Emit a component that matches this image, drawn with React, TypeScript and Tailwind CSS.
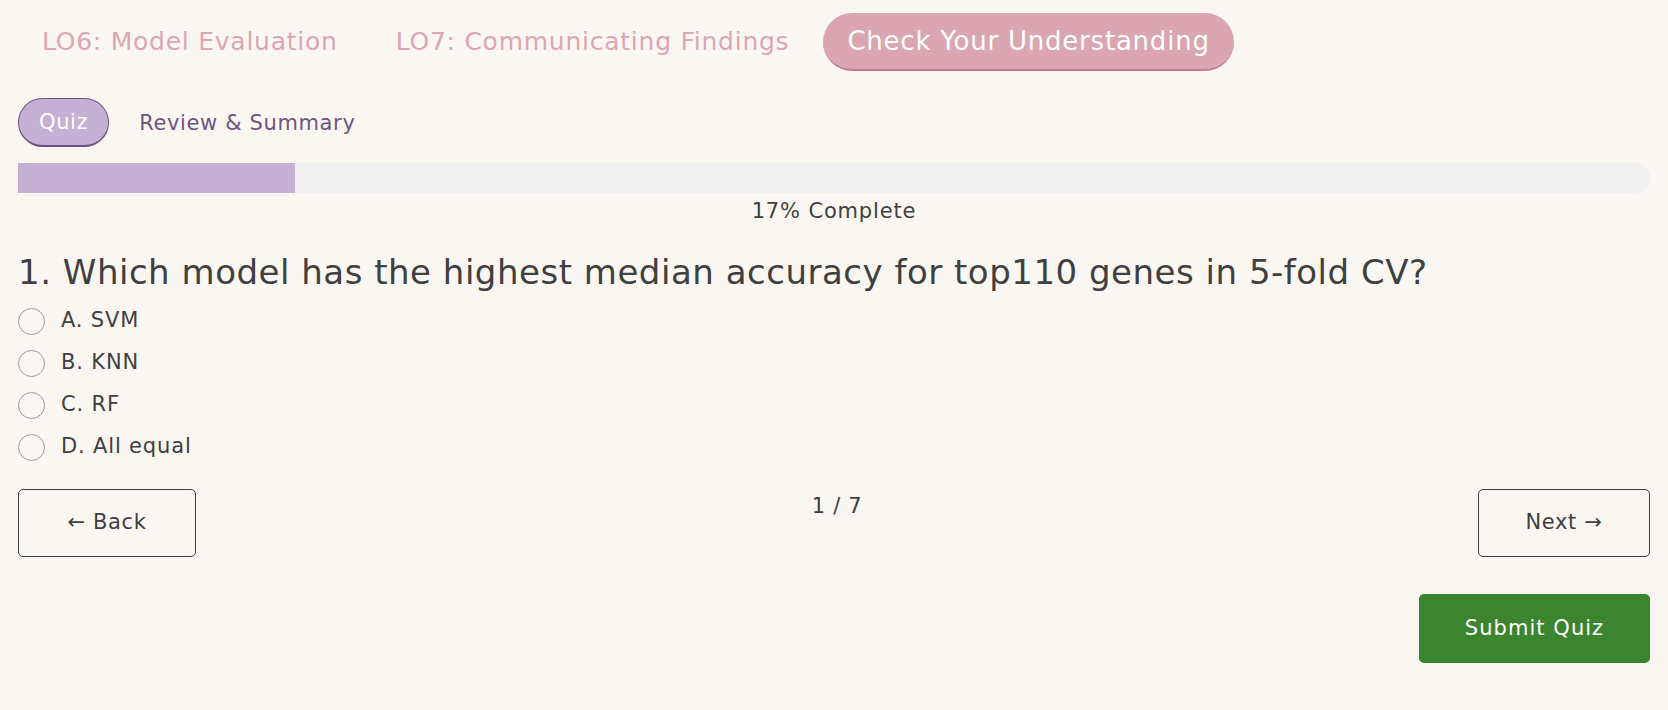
const tabs = ['LO6: Model Evaluation', 'LO7: Communicating Findings'];
const options = ['A. SVM', 'B. KNN', 'C. RF', 'D. All equal'];

export default function App() {
  return (
    <div className="min-h-[710px] bg-[#faf7f3] px-[18px] pt-[13px] text-[#404040] font-['DejaVu_Sans',sans-serif]">
      {/* Top tabs */}
      <div className="flex items-center gap-2.5">
        {tabs.map((t) => (
          <button key={t} className="px-6 py-2.5 text-[25px] leading-[36px] tracking-[0.03em] text-[#dca6b4]">
            {t}
          </button>
        ))}
        <button className="rounded-full border-b-2 border-[#c27d95] bg-[#d9a6b2] px-6 py-2.5 text-[26px] leading-[36px] tracking-[0.03em] text-white">
          Check Your Understanding
        </button>
      </div>

      {/* Sub tabs */}
      <div className="mt-[27px] flex items-center gap-2.5">
        <button className="rounded-full border border-b-2 border-[#6e5580] bg-[#c5b0d6] px-5 py-[8px] text-[21px] leading-[30px] tracking-[0.03em] text-white">
          Quiz
        </button>
        <button className="px-5 py-[8px] text-[21px] leading-[30px] tracking-[0.03em] text-[#6f5580]">
          Review &amp; Summary
        </button>
      </div>

      {/* Progress */}
      <div className="mt-[16px] h-[30px] w-full overflow-hidden rounded-r-full bg-[#f0f0f0]">
        <div className="h-full bg-[#c5b0d6]" style={{ width: '17%' }} />
      </div>
      <p className="mt-[3px] text-center text-[21px] leading-[30px] tracking-[0.04em]">17% Complete</p>

      {/* Question */}
      <h2 className="mt-[26px] text-[34px] leading-[40px] tracking-[0.015em]">
        1. Which model has the highest median accuracy for top110 genes in 5-fold CV?
      </h2>
      <div className="mt-[8px] flex flex-col">
        {options.map((o) => (
          <label key={o} className="flex h-[42px] items-center gap-[16px] text-[21px] tracking-[0.04em]">
            <span className="h-[27px] w-[27px] rounded-full border-[1.5px] border-[#9a9a9a] bg-[#faf7f3]" />
            {o}
          </label>
        ))}
      </div>

      {/* Nav */}
      <div className="mt-[21px] flex items-start justify-between">
        <button className="h-[68px] w-[178px] rounded-[5px] border border-[#404040] text-[21px] tracking-[0.03em]">
          ← Back
        </button>
        <span className="mt-[2px] text-[21px] leading-[30px] tracking-[0.03em]">1 / 7</span>
        <button className="h-[68px] w-[172px] rounded-[5px] border border-[#404040] text-[21px] tracking-[0.03em]">
          Next →
        </button>
      </div>
      <div className="mt-[37px] flex justify-end">
        <button className="h-[69px] w-[231px] rounded-[5px] bg-[#3b852f] text-[21px] tracking-[0.05em] text-white">
          Submit Quiz
        </button>
      </div>
    </div>
  );
}
